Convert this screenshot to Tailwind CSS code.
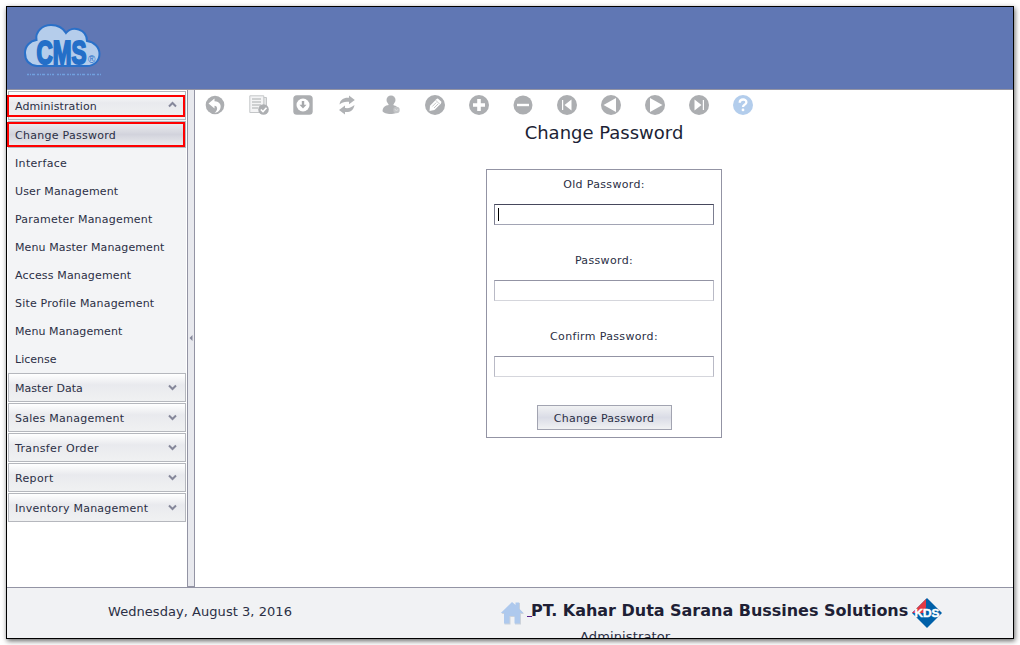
<!DOCTYPE html>
<html lang="en">
<head>
<meta charset="utf-8">
<title>Change Password</title>
<script src="https://cdn.jsdelivr.net/npm/@tailwindcss/browser@4"></script>
</head>
<body class="w-[1020px] h-[645px] overflow-hidden bg-white text-[#2b2f45] text-[11px] leading-none font-['DejaVu_Sans',sans-serif]">
<div class="pl-[6px] pt-[6px]">
<div class="w-[1008px] h-[633px] border border-black shadow-[1px_2px_5px_rgba(0,0,0,0.6)] flex flex-col overflow-hidden bg-white">
  <header class="h-[83px] shrink-0 bg-[#6077b4] border-b border-[#9394a4] pl-[15px] pt-[15px]">
    <svg width="84" height="56" viewBox="0 0 84 56">
      <path d="M15 44C7 43 3 38 3 31C3 24 8 19 14.500 18C13 10 20 3 29 3C36 3 41 6 44 11C50 3 65 7 65 19C72 20 77.500 25 77.500 32C77.500 39 72 44 65 44Z" fill="#b5cdeb" stroke="#2a70c8" stroke-width="2"/>
      <text x="14.500" y="42" textLength="50" lengthAdjust="spacingAndGlyphs" font-family="Liberation Sans" font-weight="bold" font-size="33" fill="#246fc8" stroke="#246fc8" stroke-width="2">CMS</text>
      <text x="66" y="41" font-family="Liberation Sans" font-size="10" fill="#246fc8">®</text>
      <path d="M5 52.500H32M35 52.500H79" stroke="#70a0df" stroke-width="1.500" stroke-dasharray="2 1 1 1 3 2"/>
    </svg>
  </header>
  <div class="h-[497px] shrink-0 flex">
    <nav class="w-[180px] shrink-0 pt-px pl-px pr-px">
      <div class="relative h-[29px] border border-[#b5b7bd] bg-linear-to-b from-white via-[#e9eaee] via-40% to-[#f0f1f2] pl-[6px] pr-2 flex items-center justify-between">
        <span class="pt-px tracking-[0.1px]">Administration</span>
        <svg class="-mt-[3px]" width="9" height="7" viewBox="0 0 9 7"><path d="M1 5.500L4.500 2L8 5.500" fill="none" stroke="#85879a" stroke-width="2"/></svg>
        <div class="absolute -left-[2px] top-[3px] w-[178px] h-[22px] border-2 border-[#f00]"></div>
      </div>
      <div class="bg-[#f3f4f6] pt-px h-[253px]">
        <div class="relative h-[27px] border border-[#b5b7bd] bg-linear-to-b from-[#eeeff1] via-[#d2d3dc] to-[#eeeff1] pl-[6px] flex items-center"><span class="pt-[2px] tracking-[0.27px]">Change Password</span>
          <div class="absolute -left-[2px] top-0 w-[178px] h-[25px] border-2 border-[#f00]"></div>
        </div>
        <div class="h-7 pl-[7px] flex items-center mt-px"><span class="tracking-[0.33px]">Interface</span></div>
        <div class="h-7 pl-[7px] flex items-center"><span class="tracking-[0.15px]">User Management</span></div>
        <div class="h-7 pl-[7px] flex items-center"><span class="tracking-[0.22px]">Parameter Management</span></div>
        <div class="h-7 pl-[7px] flex items-center"><span class="tracking-[0.1px]">Menu Master Management</span></div>
        <div class="h-7 pl-[7px] flex items-center"><span class="tracking-[0.16px]">Access Management</span></div>
        <div class="h-7 pl-[7px] flex items-center"><span class="tracking-[0.2px]">Site Profile Management</span></div>
        <div class="h-7 pl-[7px] flex items-center"><span class="tracking-[0.08px]">Menu Management</span></div>
        <div class="h-7 pl-[7px] flex items-center"><span>License</span></div>
      </div>
      <div class="flex flex-col gap-px">
        <div class="h-[29px] border border-[#b5b7bd] bg-linear-to-b from-white via-[#e9eaee] via-40% to-[#f0f1f2] pl-[6px] pr-2 flex items-center justify-between"><span class="pt-[2px] tracking-[0.05px]">Master Data</span><svg width="9" height="7" viewBox="0 0 9 7"><path d="M1 1.500L4.500 5L8 1.500" fill="none" stroke="#85879a" stroke-width="2"/></svg></div>
        <div class="h-[29px] border border-[#b5b7bd] bg-linear-to-b from-white via-[#e9eaee] via-40% to-[#f0f1f2] pl-[6px] pr-2 flex items-center justify-between"><span class="pt-[2px] tracking-[0.25px]">Sales Management</span><svg width="9" height="7" viewBox="0 0 9 7"><path d="M1 1.500L4.500 5L8 1.500" fill="none" stroke="#85879a" stroke-width="2"/></svg></div>
        <div class="h-[29px] border border-[#b5b7bd] bg-linear-to-b from-white via-[#e9eaee] via-40% to-[#f0f1f2] pl-[6px] pr-2 flex items-center justify-between"><span class="pt-[2px] tracking-[0.35px]">Transfer Order</span><svg width="9" height="7" viewBox="0 0 9 7"><path d="M1 1.500L4.500 5L8 1.500" fill="none" stroke="#85879a" stroke-width="2"/></svg></div>
        <div class="h-[29px] border border-[#b5b7bd] bg-linear-to-b from-white via-[#e9eaee] via-40% to-[#f0f1f2] pl-[6px] pr-2 flex items-center justify-between"><span class="pt-[2px] tracking-[0.35px]">Report</span><svg width="9" height="7" viewBox="0 0 9 7"><path d="M1 1.500L4.500 5L8 1.500" fill="none" stroke="#85879a" stroke-width="2"/></svg></div>
        <div class="h-[29px] border border-[#b5b7bd] bg-linear-to-b from-white via-[#e9eaee] via-40% to-[#f0f1f2] pl-[6px] pr-2 flex items-center justify-between"><span class="pt-[2px] tracking-[0.24px]">Inventory Management</span><svg width="9" height="7" viewBox="0 0 9 7"><path d="M1 1.500L4.500 5L8 1.500" fill="none" stroke="#85879a" stroke-width="2"/></svg></div>
      </div>
    </nav>
    <div class="w-2 shrink-0 bg-[#e8e9ee] border-x border-b border-[#9394a4] flex items-center justify-center"><svg width="4" height="6" viewBox="0 0 4 6"><path d="M3.500 0V6L.5 3Z" fill="#85879a"/></svg></div>
    <main class="flex-1">
      <div class="flex gap-6 pl-[10px] pt-[5px]">
        <svg width="20" height="20" viewBox="0 0 20 20"><circle cx="10" cy="10" r="9.300" fill="#acaeb1"/><path d="M3.500 8.500L9.500 3.500V6.300C15 6.500 17 10.500 14.800 14.800C13.500 17 12 17.500 9.500 18C13 15.500 13 11 9.500 10.800V13.500Z" fill="#fff"/></svg>
        <svg width="20" height="20" viewBox="0 0 20 20"><path d="M3.500 2.500H17.500V17H3.500Z" fill="#e4e5e6" stroke="#c4c6c8"/><path d="M.8.800H14.800V17.500H.8Z" fill="#f4f4f5" stroke="#c4c6c8"/><path d="M3 4H12M3 7H12M3 10H12M3 13H9" stroke="#c1c3c5" stroke-width="1.300"/><circle cx="14.500" cy="14.500" r="5.300" fill="#adafb2"/><path d="M11.800 14.500L14 16.500L17.500 12.700" fill="none" stroke="#fff" stroke-width="1.600"/></svg>
        <svg width="20" height="20" viewBox="0 0 20 20"><rect x=".3" y=".3" width="19.400" height="19.400" rx="3.500" fill="#acaeb1"/><circle cx="10" cy="10" r="6.500" fill="#fff"/><path d="M8.800 6H11.200V9.700H13.500L10 13.500L6.500 9.700H8.800Z" fill="#a6a8ab"/></svg>
        <svg width="20" height="20" viewBox="0 0 20 20"><path d="M2.500 9.500C3 4.500 7 2.300 12 2.800V.5L17.800 5L12 9.300V6.800C8 6.300 5.500 7 2.500 9.500ZM17.500 10C16.500 15.500 13 17.500 8 17V19.500L2 15L8 10.500V13C12 13.500 14.500 12.500 17.500 10Z" fill="#b0b2b5"/></svg>
        <svg width="20" height="20" viewBox="0 0 20 20"><circle cx="10" cy="5" r="4.500" fill="#b0b2b5"/><path d="M7.500 8H12.500V11H7.500Z" fill="#b0b2b5"/><path d="M1.500 16C2 11 5 10 10 10S17 12 17.500 16C16 20 3 20 1.500 16Z" fill="#b0b2b5"/><circle cx="15.500" cy="15" r="3.200" fill="#c3c5c7"/><path d="M13.800 14L15.500 16L17 14.200" fill="none" stroke="#dcddde"/></svg>
        <svg width="20" height="20" viewBox="0 0 20 20"><circle cx="10" cy="10" r="10" fill="#acaeb1"/><path d="M4.500 16L5 10.800L11.300 4.200Q12.500 3 13.700 4.200L15.800 6.300Q17 7.500 15.800 8.700L9.500 15Z" fill="#fff"/><path d="M10.800 5.300L14.700 9.200M7.300 11.500L11.300 7.500M9 13L13 9" stroke="#b7b9bb" stroke-width=".8"/></svg>
        <svg width="20" height="20" viewBox="0 0 20 20"><circle cx="10" cy="10" r="10" fill="#acaeb1"/><path d="M8.200 4H11.800V8.200H16V11.800H11.800V16H8.200V11.800H4V8.200H8.200Z" fill="#fff"/></svg>
        <svg width="20" height="20" viewBox="0 0 20 20"><circle cx="10" cy="10" r="9.500" fill="#acaeb1"/><path d="M4 8.800H16V11.200H4Z" fill="#fff"/></svg>
        <svg width="20" height="20" viewBox="0 0 20 20"><circle cx="10" cy="10" r="10" fill="#acaeb1"/><path d="M5 5H6.200V15H5ZM14.500 4.500V15.500L7.500 10Z" fill="#fff"/></svg>
        <svg width="20" height="20" viewBox="0 0 20 20"><circle cx="10" cy="10" r="10" fill="#acaeb1"/><path d="M15 3V17L2.500 10Z" fill="#fff"/></svg>
        <svg width="20" height="20" viewBox="0 0 20 20"><circle cx="10" cy="10" r="10" fill="#acaeb1"/><path d="M5 3V17L17.500 10Z" fill="#fff"/></svg>
        <svg width="20" height="20" viewBox="0 0 20 20"><circle cx="10" cy="10" r="10" fill="#acaeb1"/><path d="M15 5H13.800V15H15ZM5.500 4.500V15.500L12.500 10Z" fill="#fff"/></svg>
        <svg width="20" height="20" viewBox="0 0 20 20"><circle cx="10" cy="10" r="10" fill="#b3cdec"/><path d="M6.700 7.800C6.700 3.500 13.400 3.500 13.400 7.200C13.400 9.700 10 9.600 10 12" fill="none" stroke="#fff" stroke-width="2.300"/><circle cx="10" cy="14.900" r="1.400" fill="#fff"/></svg>
      </div>
      <div class="pt-[8px] h-[54px] text-center text-[18px] leading-[20px] text-[#201f35]">Change Password</div>
      <div class="w-[236px] h-[269px] mx-auto border border-[#9394a4] px-[7px] text-center flex flex-col items-center">
        <label class="mt-[8px] leading-[14px] tracking-[0.33px]">Old Password:</label>
        <div class="mt-[12px] w-full h-[21px] border border-t-[#46485c] border-x-[#7c7e90] border-b-[#a2a4b4] pl-[3px] pt-[3px]"><div class="w-px h-[13px] bg-black"></div></div>
        <label class="mt-[29px] leading-[14px] tracking-[0.35px]">Password:</label>
        <div class="mt-[12px] w-full h-[21px] border border-t-[#9394a4] border-x-[#b9bac6] border-b-[#d5d6dc]"></div>
        <label class="mt-[29px] leading-[14px] tracking-[0.35px]">Confirm Password:</label>
        <div class="mt-[12px] w-full h-[21px] border border-t-[#9394a4] border-x-[#b9bac6] border-b-[#d5d6dc]"></div>
        <button class="mt-[28px] pt-[2px] w-[135px] h-[25px] border border-[#a2a4b1] bg-linear-to-b from-[#f1f2f3] via-[#dadce6] to-[#f1f2f3] tracking-[0.22px]">Change Password</button>
      </div>
    </main>
  </div>
  <footer class="h-[51px] shrink-0 border-t border-[#9394a4] bg-[#f1f2f4] flex">
    <div class="w-[386px] text-center pt-[16px] text-[13px] leading-[16px] tracking-[0.05px]">Wednesday, August 3, 2016</div>
    <div class="w-[464px] pl-[107px]">
      <div class="flex h-[41px] pt-[9px] whitespace-nowrap">
        <svg class="mt-[3px] shrink-0" width="25" height="26" viewBox="0 0 25 26"><path d="M1.500 14L12.500 3L16 6V3H20V9.500L24 14H21V24.500H15V17H10.500V24.500H4.500V14Z" fill="#ccd2da"/><path d="M.8 13L12 2L15.500 5V2.500H19.200V8.800L23.500 13H20V23.500H14.500V16H9.500V23.500H4V13Z" fill="#aec9ed"/></svg>
        <span class="text-[16px] leading-[26px] text-[#551a8b] underline pl-[2px] w-[6px] shrink-0 decoration-1">&nbsp;</span>
        <span class="text-[16px] leading-[28px] font-bold text-[#201f35] tracking-[-0.02px]">PT. Kahar Duta Sarana Bussines Solutions</span>
      </div>
      <div class="pl-[80px] text-[13px] leading-[15px] tracking-[0.13px]">Administrator</div>
    </div>
    <svg class="mt-[10px] ml-[55px]" width="30" height="30" viewBox="0 0 30 30"><path d="M15 0L30 15L15 30L0 15Z" fill="#0060a8"/><path d="M14 1L0 15H12L14 9Z" fill="#e13a44"/><text x="2.500" y="19" textLength="25" lengthAdjust="spacingAndGlyphs" font-family="Liberation Sans" font-weight="bold" font-size="10" fill="#fff" stroke="#fff" stroke-width=".4">KDS</text></svg>
  </footer>
</div>
</div>
</body>
</html>
